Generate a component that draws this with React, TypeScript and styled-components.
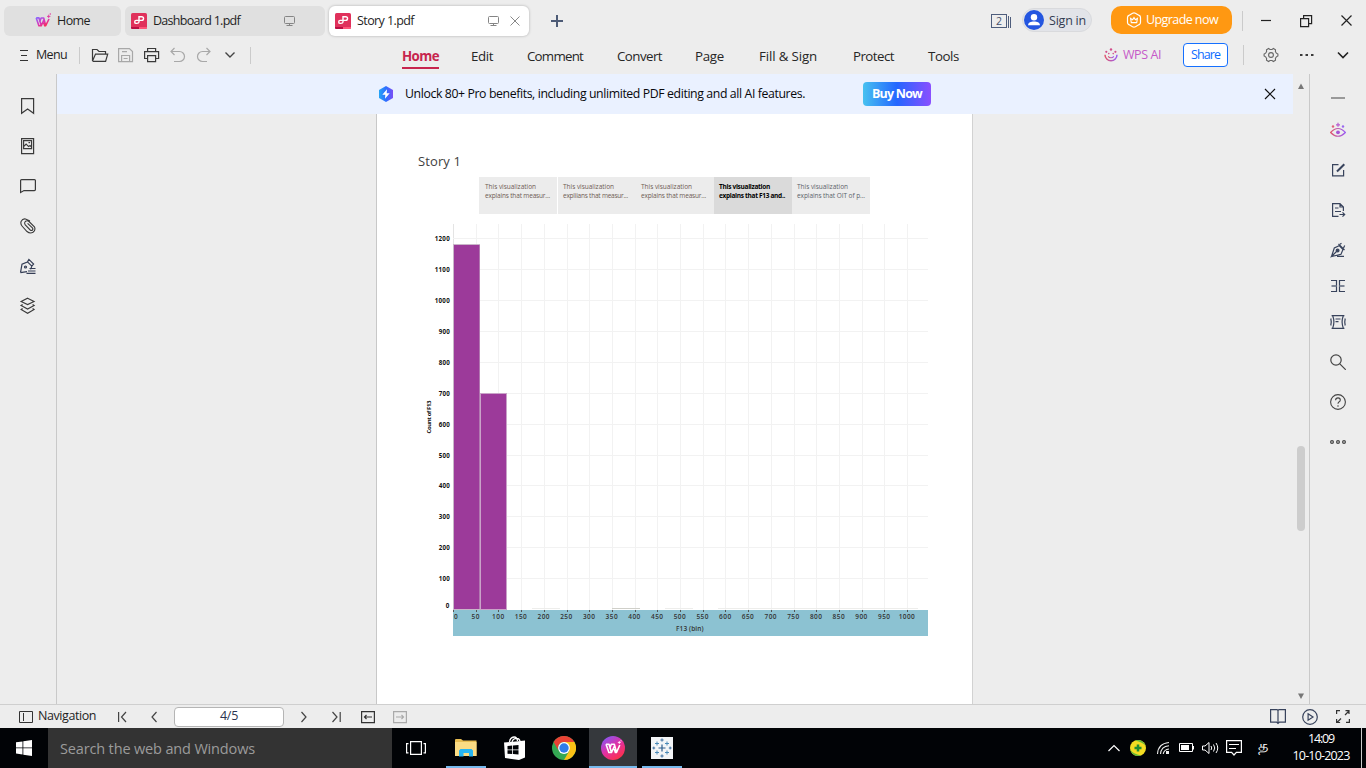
import React, { useLayoutEffect, useRef, useState } from "react";
import styled, { createGlobalStyle } from "styled-components";

const GlobalStyle = createGlobalStyle`
  * { box-sizing: border-box; }
  body { margin: 0; background: #ededed; }
  svg { display: block; flex: none; }
`;

const FONT = `"Open Sans", "Noto Sans", sans-serif`;

/* ---------- fitted text ---------- */

const Label = styled.span<{ $size?: number; $color?: string; $weight?: number; $w: number; $lift?: number }>`
  display: block;
  flex: none;
  width: ${(p) => p.$w}px;
  font-size: ${(p) => p.$size ?? 12.5}px;
  font-weight: ${(p) => p.$weight ?? 400};
  color: ${(p) => p.$color ?? "#1f1f1f"};
  padding-bottom: ${(p) => (p.$lift ?? 0) * 2}px;
  white-space: nowrap;
`;

type TextProps = { w: number; size?: number; color?: string; weight?: number; lift?: number; children: string };

function Text({ w, size, color, weight, lift, children }: TextProps) {
  const ref = useRef<HTMLSpanElement>(null);
  const [spacing, setSpacing] = useState(0);
  useLayoutEffect(() => {
    if (ref.current) {
      const natural = ref.current.getBoundingClientRect().width;
      setSpacing((w - natural) / Math.max(1, children.length));
    }
  }, []);
  return (
    <Label $w={w} $size={size} $color={color} $weight={weight} $lift={lift}>
      <span ref={ref} style={{ letterSpacing: `${spacing}px` }}>{children}</span>
    </Label>
  );
}

/* ---------- frame ---------- */

const Window = styled.div`
  width: 1366px;
  height: 768px;
  overflow: hidden;
  display: flex;
  flex-direction: column;
  background: #ededed;
  font-family: ${FONT};
`;

const TabBar = styled.header`
  height: 42px;
  display: flex;
  align-items: center;
  padding: 0 14px 0 4px;
  flex: none;
`;

const Tab = styled.div<{ $w: number; $active?: boolean; $pad: number }>`
  width: ${(p) => p.$w}px;
  height: 30px;
  margin-right: 4px;
  padding: 0 10px 0 ${(p) => p.$pad}px;
  display: flex;
  align-items: center;
  gap: 6px;
  border-radius: 6px;
  background: ${(p) => (p.$active ? "#fff" : "#e0e0e0")};
  box-shadow: ${(p) => (p.$active ? "0 0 2px 1px #cfcfcf" : "none")};
`;

const Spacer = styled.div`
  flex: 1;
`;

const Gap = styled.div<{ $w: number }>`
  width: ${(p) => p.$w}px;
  flex: none;
`;

const Divider = styled.div<{ $h: number }>`
  width: 1px;
  height: ${(p) => p.$h}px;
  background: #cbcbcb;
  flex: none;
`;

const AccountPill = styled.div`
  width: 70px;
  height: 24px;
  border-radius: 12px;
  border: 1px solid #d9dadd;
  background: #e2e4e9;
  display: flex;
  align-items: center;
  gap: 5px;
  padding-left: 1px;
  margin-bottom: 2px;
`;

const UpgradeButton = styled.div`
  width: 121px;
  height: 28px;
  border-radius: 10px;
  background: #ff9812;
  display: flex;
  align-items: center;
  gap: 4px;
  padding-left: 15px;
  margin-bottom: 2px;
`;

const Toolbar = styled.div`
  height: 32px;
  display: flex;
  align-items: center;
  flex: none;
  padding-bottom: 6px;
`;

const MenuButton = styled.div`
  width: 79px;
  padding-left: 19px;
  display: flex;
  align-items: center;
  gap: 7px;
`;

const ToolCell = styled.div<{ $w?: number }>`
  width: ${(p) => p.$w ?? 26}px;
  height: 26px;
  flex: none;
  display: flex;
  align-items: center;
  justify-content: center;
`;

const MenuTabs = styled.nav`
  display: flex;
  height: 26px;
  width: 702px;
`;

const MenuTab = styled.div<{ $active?: boolean; $gap: number }>`
  height: 27px;
  line-height: 29px;
  margin-left: ${(p) => p.$gap}px;
  border-bottom: 2px solid ${(p) => (p.$active ? "#c7254e" : "transparent")};
  flex: none;
`;

const ShareButton = styled.div`
  width: 45px;
  height: 24px;
  border: 1px solid #1570ff;
  border-radius: 4px;
  background: #fff;
  display: flex;
  align-items: center;
  justify-content: center;
`;

/* ---------- body ---------- */

const Body = styled.div`
  display: flex;
  height: 630px;
  flex: none;
`;

const LeftRail = styled.aside`
  width: 57px;
  border-right: 1px solid #c9c9c9;
  padding: 12px 2px 0 0;
`;

const RailCell = styled.div<{ $h: number }>`
  height: ${(p) => p.$h}px;
  display: flex;
  align-items: center;
  justify-content: center;
`;

const RightRail = styled.aside`
  width: 57px;
  border-left: 1px solid #c9c9c9;
  padding-top: 16px;
`;

const Workspace = styled.main`
  width: 1236px;
  display: flex;
  flex-direction: column;
`;

const Banner = styled.div`
  height: 40px;
  flex: none;
  background: #eaf1ff;
  display: flex;
  align-items: center;
  padding-left: 321px;
`;

const BuyButton = styled.div`
  width: 68px;
  height: 24px;
  border-radius: 4px;
  background: linear-gradient(90deg, #47c1f0, #2466ff 50%, #8a4fff);
  display: flex;
  align-items: center;
  justify-content: center;
`;

const ScrollTrack = styled.div`
  width: 16px;
  display: flex;
  flex-direction: column;
  align-items: center;
  justify-content: space-between;
  padding: 9px 0 5px;
`;

const ScrollThumb = styled.div`
  width: 8px;
  height: 85px;
  border-radius: 4px;
  background: #cdcdcd;
  margin-top: 194px;
`;

const Page = styled.article`
  width: 597px;
  height: 590px;
  margin-left: 319px;
  background: #fff;
  border-left: 1px solid #c8c8c8;
  border-right: 1px solid #d2d2d2;
  padding: 38px 0 0 41px;
`;

const StoryStrip = styled.div`
  display: flex;
  margin: 7px 0 10px 61px;
`;

const StoryPoint = styled.div<{ $active?: boolean; $first?: boolean }>`
  width: ${(p) => (p.$first ? 79 : 78)}px;
  height: 37px;
  padding: 5px 0 0 ${(p) => (p.$first ? 6 : 5)}px;
  background: ${(p) => (p.$active ? "#dadada" : "#ececec")};
  border-right: ${(p) => (p.$first ? "1px solid #fff" : "0")};
  line-height: 9px;
`;

/* ---------- footer ---------- */

const StatusBar = styled.div`
  height: 24px;
  flex: none;
  border-top: 1px solid #cfcfcf;
  display: flex;
  align-items: center;
`;

const PageBox = styled.div`
  width: 110px;
  height: 20px;
  border: 1px solid #b5b5b5;
  border-radius: 4px;
  background: #fff;
  display: flex;
  align-items: center;
  justify-content: center;
`;

const Taskbar = styled.footer`
  height: 40px;
  flex: none;
  background: #010306;
  display: flex;
`;

const SearchBox = styled.div`
  width: 344px;
  background: #333;
  display: flex;
  align-items: center;
  padding-left: 12px;
`;

const TaskItem = styled.div<{ $w: number; $open?: boolean; $active?: boolean; $gap?: number }>`
  width: ${(p) => p.$w}px;
  height: 40px;
  margin-left: ${(p) => p.$gap ?? 0}px;
  display: flex;
  align-items: center;
  justify-content: center;
  background: ${(p) => (p.$active ? "#35383c" : "transparent")};
  border-bottom: ${(p) => (p.$open ? "2px solid #76b9ed" : "0")};
  padding-top: ${(p) => (p.$open ? 2 : 0)}px;
`;

const Clock = styled.div`
  width: 74px;
  display: flex;
  flex-direction: column;
  align-items: center;
  line-height: 17px;
  padding-top: 2px;
`;

const InputLanguage = styled.div`
  width: 18px;
  text-align: center;
  color: #fff;
  font-size: 16px;
  line-height: 35px;
`;

/* ---------- icons ---------- */

type IconProps = { w?: number; h?: number; c?: string; sw?: number; children: React.ReactNode };

function Icon({ w = 18, h = 18, c = "#3a3a3a", sw = 1.2, children }: IconProps) {
  return (
    <svg width={w} height={h} viewBox={`0 0 ${w} ${h}`} fill="none" stroke={c} strokeWidth={sw}>
      {children}
    </svg>
  );
}

const WpsLogo = () => (
  <svg width="16" height="16" viewBox="0 0 16 16" fill="none">
    <defs>
      <linearGradient id="wps" x1="0" y1="0" x2="1" y2="1">
        <stop offset="0" stopColor="#8a68ff" />
        <stop offset=".5" stopColor="#d936b8" />
        <stop offset="1" stopColor="#ff2d3d" />
      </linearGradient>
    </defs>
    <path d="M1.200 4.900h2.800l2.300 7.800L9 6.500M4.600 9l1.500-4h2.600l2 7.700L14 6M1.200 4.900l2.700 7.800h2.400M8.700 9.500l1 3.200h1" stroke="url(#wps)" strokeWidth="1.600" strokeLinejoin="round" />
    <path d="M12 3.400h3.400M13.700 1.700v3.400" stroke="#e3379c" strokeWidth=".9" />
    <circle cx="15.300" cy="1" r=".7" fill="#e3379c" />
  </svg>
);

const PdfLogo = () => (
  <svg width="16" height="16" viewBox="0 0 16 16">
    <rect width="16" height="16" rx="1.600" fill="#e0315b" />
    <path d="M0 14h8v2H1.500Q0 16 0 14.500z" fill="#b90e43" />
    <path d="M8 14h8v.5Q16 16 14.500 16H8z" fill="#ff5478" />
    <path d="M8 9.300V3.700h2.700a1.800 1.800 0 0 1 0 3.700H5.200a1.500 1.500 0 0 0 0 3Q7.800 10.600 8 9" fill="none" stroke="#fff" strokeWidth="1.400" />
  </svg>
);

const Monitor = () => (
  <Icon w={12} h={12} c="#858585" sw={1}>
    <rect x=".5" y="1.500" width="10" height="7" rx="1" />
    <path d="M5.500 8.500v2M2.500 10.500h6" />
  </Icon>
);

const TabClose = () => <Icon w={14} h={10} c="#888" sw={1}><path d="M4.500.500l9 9M13.500.500l-9 9" /></Icon>;

const UserBadge = () => (
  <svg width="20" height="20" viewBox="0 0 20 20">
    <circle cx="10" cy="10" r="10" fill="#2456e0" />
    <circle cx="10" cy="7.200" r="3.200" fill="#fff" />
    <path d="M4 15.200c.4-3 2.800-3.700 6-3.700s5.600.7 6 3.700z" fill="#fff" />
  </svg>
);

const Crown = () => (
  <Icon w={16} h={16} c="#fff" sw={1.2}>
    <path d="M6.600 1.200q1.400-.7 2.800 0l3.800 2.200q1.300.7 1.300 2.200v4.800q0 1.500-1.300 2.200l-3.800 2.200q-1.400.7-2.800 0L2.800 12.600q-1.300-.7-1.300-2.200V5.600q0-1.500 1.300-2.200z" />
    <path d="M4.600 6.400l2 1.400L8 5.600l1.400 2.200 2-1.400-.7 4.200H5.300z" strokeWidth="1.100" />
  </Icon>
);

const AiFace = () => (
  <svg width="14" height="14" viewBox="0 0 14 14" fill="none">
    <defs>
      <linearGradient id="ai" x1="0" x2="1">
        <stop offset="0" stopColor="#e0566c" />
        <stop offset="1" stopColor="#9a5cf5" />
      </linearGradient>
    </defs>
    <path d="M1 6.800a6 6 0 0 0 12 0" stroke="url(#ai)" strokeWidth="1.500" />
    <path d="M4.300 8.200a2.800 2.200 0 0 0 5.400 0" stroke="url(#ai)" strokeWidth="1.100" />
    <g fill="#d24f8c">
      <circle cx="2.300" cy="3.800" r="1.100" /><circle cx="7" cy="1.500" r="1.200" /><circle cx="11.400" cy="3.800" r="1.100" />
      <circle cx="4.800" cy="5.600" r=".8" /><circle cx="9.200" cy="5.600" r=".8" />
    </g>
  </svg>
);

const Gear = () => (
  <Icon w={16} h={16} c="#666" sw={1.1}>
    <path d="M5.600 1.500l1.400 1h2l1.400-1 2.100 1.300-.1 1.700 1 1.700 1.500.8v2l-1.500.8-1 1.700.1 1.700-2.100 1.300-1.400-1H7l-1.400 1-2.100-1.300.1-1.700-1-1.700L1.100 9V7l1.500-.8 1-1.700-.1-1.700z" />
    <circle cx="8" cy="8" r="2.400" />
  </Icon>
);

const WindowsLogo = () => (
  <svg width="16" height="16" viewBox="0 0 16 16" fill="#fff">
    <path d="M0 2.300l6.500-.9v6.100H0zM7.300 1.300L16 0v7.500H7.300zM0 8.300h6.500v6.200L0 13.600zM7.300 8.300H16V16l-8.700-1.300z" />
  </svg>
);

const Explorer = () => (
  <svg width="22" height="18" viewBox="0 0 22 18">
    <path d="M0 1q0-1 1-1h5l2 1.500h13.500V17H0z" fill="#e8bd52" />
    <path d="M0 3h21.500v14H0z" fill="#fbdc84" />
    <path d="M4 17.500v-6L5.500 10h11l1.500 1.500v6h-4V14H8.500v3.500z" fill="#27b5f1" />
  </svg>
);

const Store = () => (
  <svg width="22" height="24" viewBox="0 0 22 24">
    <path d="M5.500 6Q6 1.500 10 1q3-.2 3.500 4M8 6q1-3.800 5-3.700Q15.500 2.500 16 5" fill="none" stroke="#fff" strokeWidth="1.300" />
    <path d="M0 6.600L21 4.500v17L15 24 1 22z" fill="#fff" />
    <path d="M3.500 10l4.700-.5v3.900H3.500zM9 9.400l5.500-.5v4.500H9zM3.500 14.200h4.700v3.900l-4.700-.4zM9 14.200h5.500v4.400L9 18.100z" fill="#010306" />
  </svg>
);

const Chrome = () => (
  <svg width="24" height="24" viewBox="0 0 24 24">
    <circle cx="12" cy="12" r="12" fill="#34a853" />
    <path d="M22.400 6A12 12 0 0 1 12 24l5.200-9V6z" fill="#fbc116" />
    <path d="M12 6h10.400l-5.200 9z" fill="#fbc116" />
    <path d="M1.600 6A12 12 0 0 1 22.400 6H12a6 6 0 0 0-5.200 9z" fill="#e94235" />
    <circle cx="12" cy="12" r="5.900" fill="#fff" />
    <circle cx="12" cy="12" r="4.700" fill="#2f7de9" />
  </svg>
);

const WpsApp = () => (
  <svg width="24" height="24" viewBox="0 0 24 24" fill="none">
    <defs>
      <linearGradient id="app" x1=".1" y1="0" x2=".8" y2="1">
        <stop offset="0" stopColor="#7c5cff" />
        <stop offset=".5" stopColor="#e230a4" />
        <stop offset="1" stopColor="#ff3040" />
      </linearGradient>
    </defs>
    <circle cx="12" cy="12" r="12" fill="url(#app)" />
    <path d="M5 8.200h3l2.500 8.300 3.200-7M8.700 12.500l1.600-4.300h3l2.200 8.300L18.800 9M5 8.200l2.900 8.300h2.600M13.300 13l1.100 3.500h1" stroke="#fff" strokeWidth="1.600" strokeLinejoin="round" />
    <path d="M18.300 5v3M16.800 6.500h3" stroke="#fff" strokeWidth=".8" />
    <circle cx="20" cy="4.800" r=".6" fill="#fff" />
  </svg>
);

const cross = (x: number, y: number, r: number) => `M${x - r} ${y}h${2 * r}M${x} ${y - r}v${2 * r}`;

const Tableau = () => (
  <svg width="22" height="22" viewBox="0 0 22 22" fill="none">
    <rect width="22" height="22" fill="#f3f5f7" />
    <path d={cross(11, 11, 3.5)} stroke="#2c5d8c" strokeWidth="1.200" />
    <path d={[cross(6, 6.5, 2), cross(16, 6.5, 2), cross(6, 15.5, 2), cross(16, 15.5, 2)].join("")} stroke="#4a8ab8" strokeWidth="1" />
    <path d={[cross(11, 3, 1.6), cross(11, 19, 1.6), cross(2.8, 11, 1.4), cross(19.2, 11, 1.4)].join("")} stroke="#3c6fa0" strokeWidth="1" />
  </svg>
);

/* ---------- chart ---------- */

const X_TICKS = Array.from({ length: 21 }, (_, i) => i * 50);
const Y_TICKS = Array.from({ length: 13 }, (_, i) => i * 100);
const xPos = (v: number) => 35.5 + (v / 50) * 22.7;
const yPos = (v: number) => Math.round(385 - v * 0.309) + 0.5;

function Histogram() {
  return (
    <svg width="512" height="414" viewBox="0 0 512 414" fontFamily={FONT}>
      {X_TICKS.map((v) => (
        <path key={v} d={`M${Math.round(xPos(v) - 0.5) + 0.5} 0V386`} stroke={v ? "#f2f2f2" : "#e4e4e4"} />
      ))}
      {Y_TICKS.slice(1).map((v) => (
        <path key={v} d={`M35 ${yPos(v)}H510`} stroke="#f2f2f2" />
      ))}
      <rect x="35" y="20" width="27" height="366" fill="#c9b6c9" />
      <rect x="62" y="169" width="27" height="217" fill="#c9a3c8" />
      <rect x="36" y="21" width="25.500" height="364" fill="#9c3a9a" />
      <rect x="63" y="170" width="25" height="215" fill="#9c3a9a" />
      <path d="M114 384.500h28M247 384.500h28M300 384.500h200" stroke="#ededeb" />
      <path d="M194 384.500h28" stroke="#cfcfc9" />
      <rect x="35" y="386" width="475" height="26" fill="#8cc2d2" />
      {X_TICKS.map((v) => {
        const w = v === 0 ? 4 : v < 100 ? 8 : v < 1000 ? 12 : 16;
        const x = v === 0 ? 38 : xPos(v) - 0.8;
        return (
          <g key={v}>
            <path d={`M${Math.round(xPos(v) - 0.5) + 0.5} 386v2`} stroke="#555" />
            <text x={x - w / 2} y="395.200" fontSize="6.500" fontWeight="600" fill="#333" textLength={w}>{v}</text>
          </g>
        );
      })}
      {Y_TICKS.map((v) => {
        const w = v === 0 ? 4 : v < 1000 ? 11 : 15;
        return (
          <text key={v} x={31.700 - w} y={v === 0 ? 384 : yPos(v) + 2.300} fontSize="6.200" fontWeight="700" fill="#111" textLength={w}>{v}</text>
        );
      })}
      <text x="258" y="406.800" fontSize="6.500" fontWeight="600" fill="#333" textLength="27.500">F13 (bin)</text>
      <text transform="translate(12.800 209.500) rotate(-90)" fontSize="6" fontWeight="700" fill="#111" textLength="33">Count of F13</text>
    </svg>
  );
}

const POINTS: { lines: [string, string]; widths: [number, number]; color: string }[] = [
  { lines: ["This visualization", "explains that measur..."], widths: [51, 65], color: "#6e5c54" },
  { lines: ["This visualization", "expliians that measur..."], widths: [51, 65], color: "#6e5c54" },
  { lines: ["This visualization", "explains that measur..."], widths: [51, 65], color: "#6e5c54" },
  { lines: ["This visualization", "explains that F13 and.."], widths: [51, 66], color: "#000" },
  { lines: ["This visualization", "explains that OIT of p..."], widths: [51, 68], color: "#5c646b" },
];

const MENU: [string, number, number][] = [
  ["Home", 37, 151], ["Edit", 22, 32], ["Comment", 56, 34], ["Convert", 45, 34],
  ["Page", 29, 33], ["Fill & Sign", 58, 35], ["Protect", 41, 36], ["Tools", 31, 34],
];

export default function App() {
  return (
    <Window>
      <GlobalStyle />
      <TabBar>
        <Tab $w={117} $pad={31}><WpsLogo /><Text w={33} lift={0.5}>Home</Text></Tab>
        <Tab $w={200} $pad={6}><PdfLogo /><Text w={87} lift={0.5}>Dashboard 1.pdf</Text><Gap $w={32} /><Monitor /></Tab>
        <Tab $w={200} $pad={6} $active><PdfLogo /><Text w={57} lift={0.5}>Story 1.pdf</Text><Gap $w={62} /><Monitor /><TabClose /></Tab>
        <Gap $w={18} />
        <Icon w={12} h={12} c="#4d5b76" sw={2}><path d="M6 0v12M0 6h12" /></Icon>
        <Spacer />
        <Icon w={21} h={16} c="#4e5d7c" sw={1}>
          <rect x=".5" y="1.500" width="15" height="13" />
          <path d="M17.500 3v12M19.500 4v11" />
          <text x="5" y="12" fontSize="10.500" fontFamily={FONT} fill="#44506b" stroke="none">2</text>
        </Icon>
        <Gap $w={10} />
        <AccountPill><UserBadge /><Text w={37} color="#333c52">Sign in</Text></AccountPill>
        <Gap $w={19} />
        <UpgradeButton><Crown /><Text w={72} color="#fff" lift={0.5}>Upgrade now</Text></UpgradeButton>
        <Gap $w={10} />
        <Divider $h={20} />
        <Gap $w={18} />
        <Icon w={11} h={12} c="#222"><path d="M0 5.500h10" /></Icon>
        <Gap $w={28} />
        <Icon w={13} h={14} c="#222"><path d="M.6 4.600h8v8h-8zM3.600 4.600v-3h8v8h-3" /></Icon>
        <Gap $w={28} />
        <Icon w={11} h={12} c="#222"><path d="M.5.500l10 10M10.500.500l-10 10" /></Icon>
      </TabBar>

      <Toolbar>
        <MenuButton>
          <Icon w={10} h={12} c="#333" sw={1}><path d="M1 1.500h8M2 6.500h6M1 11.500h8" /></Icon>
          <Text w={31} lift={0.5}>Menu</Text>
        </MenuButton>
        <Divider $h={17} />
        <Gap $w={7} />
        <ToolCell><Icon><path d="M1.500 15V3.500h4.500l2 2h6.500V8M1.500 15L4.500 8.100h12.200L14.600 15.300H1.500" /></Icon></ToolCell>
        <ToolCell><Icon c="#a8a8a8"><path d="M1.600 2.600h10.800l3.100 3v10H1.600zM4.600 15.500v-6h8v6M5 5.600h5M6.600 12.500h4" /></Icon></ToolCell>
        <ToolCell><Icon><path d="M4.600 5.500v-3h8v3M4.600 12.500h-3V5.600h14v6.900h-3M4.600 9.600h8v6h-8z" /></Icon></ToolCell>
        <ToolCell><Icon c="#a8a8a8"><path d="M5.500 2L2 5.500 5.500 9M2 5.500h8.500a5 5 0 0 1 0 10H5" /></Icon></ToolCell>
        <ToolCell><Icon c="#a8a8a8"><path d="M11.500 2L15 5.500 11.500 9M15 5.500H7.500a5 5 0 0 0 0 10H12" /></Icon></ToolCell>
        <ToolCell><Icon w={12} h={8} c="#444" sw={1.4}><path d="M1.500 1.500L6 6l4.500-4.500" /></Icon></ToolCell>
        <Gap $w={7} />
        <Divider $h={17} />
        <MenuTabs>
          {MENU.map(([name, w, gap], i) => (
            <MenuTab key={name} $active={i === 0} $gap={gap}>
              <Text w={w} size={13.3} weight={i ? 400 : 700} color={i ? "#262626" : "#c7254e"}>{name}</Text>
            </MenuTab>
          ))}
        </MenuTabs>
        <Gap $w={151} />
        <AiFace />
        <Gap $w={5} />
        <Text w={38} color="#c659c8" lift={0.5}>WPS AI</Text>
        <Gap $w={22} />
        <ShareButton><Text w={29} color="#0d6bff" lift={0.5}>Share</Text></ShareButton>
        <Gap $w={15} />
        <Divider $h={20} />
        <Gap $w={19} />
        <Gear />
        <Gap $w={21} />
        <Icon w={14} h={4}><path d="M0 2h2.500M5.500 2H8M11 2h2.500" strokeWidth="2" /></Icon>
        <Gap $w={23} />
        <Icon w={12} h={8} c="#222" sw={1.6}><path d="M1 1.500l5 5 5-5" /></Icon>
      </Toolbar>

      <Body>
        <LeftRail>
          <RailCell $h={40}><Icon><path d="M3.600 1.600h12v14.700l-6-4.300-6 4.300z" /></Icon></RailCell>
          <RailCell $h={40}><Icon><path d="M3.600 1.600h12v15h-12zM5.600 3.600h8v8h-8zM5.600 9.600l2.500-2.500 2.500 2.500 1.500-1 1.500 1.500" /><path d="M10.500 5.600h1.600" /></Icon></RailCell>
          <RailCell $h={40}><Icon><path d="M4.500 2.600h12q.9 0 .9 1v9q0 1-1 1H6l-3.400 1.900V3.600q0-1 1-1z" /></Icon></RailCell>
          <RailCell $h={40}><Icon sw={1.1}><path d="M12 4L7.500 2Q4.600 1.500 3.200 4.200 2.200 7 4 9l5 5.500q3 2.600 6 .8 3-2.300 1.400-5.500L11 4.500Q9 3 7.300 4.500 6 6 7.300 8l4.900 5q1.300 1 2.300 0 .8-1-.1-2.100L9.600 6.300" /></Icon></RailCell>
          <RailCell $h={40}><Icon c="#353e56"><path d="M2.500 15.600L4 7.100l5.500-2.200 4.300 4.300-1.200 3.200M2.500 15.600l6.500-1M9.500 4.900l1.400-2.500 4.700 4.700-1.800 2.100M11.500 11.500h6M10 14h7.500M8.500 16.400h9" /><circle cx="7.500" cy="10" r="1" /></Icon></RailCell>
          <RailCell $h={40}><Icon sw={1.1}><path d="M9.600 1.200l6.500 3.200-6.500 3.200-6.500-3.200zM4.600 7.600l-1.500.8L9.600 12l6.500-3.600-1.500-.8M4.600 11.500l-1.500 1 6.500 3.800 6.500-3.800-1.500-1" /></Icon></RailCell>
        </LeftRail>

        <Workspace>
          <Banner>
            <svg width="16" height="16" viewBox="0 0 16 16">
              <defs><linearGradient id="bolt" x1="0" x2="1"><stop offset="0" stopColor="#25a5f5" /><stop offset=".5" stopColor="#2d6fff" /><stop offset="1" stopColor="#7c4df5" /></linearGradient></defs>
              <path d="M8 0l7 4v8l-7 4-7-4V4z" fill="url(#bolt)" />
              <path d="M9 3.200L4.300 8.800h3L7 12.800l4.700-5.600h-3z" fill="#fff" />
            </svg>
            <Gap $w={11} />
            <Text w={400} size={12.3} color="#08080c" lift={0.5}>Unlock 80+ Pro benefits, including unlimited PDF editing and all AI features.</Text>
            <Gap $w={58} />
            <BuyButton><Text w={50} weight={700} color="#fff" lift={0.5}>Buy Now</Text></BuyButton>
            <Gap $w={333} />
            <Icon w={12} h={12} c="#111"><path d="M1 1l10 10M11 1L1 11" /></Icon>
          </Banner>
          <Page>
            <Text w={43} size={13} color="#414141">Story 1</Text>
            <StoryStrip>
              {POINTS.map((p, i) => (
                <StoryPoint key={i} $active={i === 3} $first={i === 0}>
                  <Text w={p.widths[0]} size={6.5} weight={i === 3 ? 700 : 400} color={p.color}>{p.lines[0]}</Text>
                  <Text w={p.widths[1]} size={6.5} weight={i === 3 ? 700 : 400} color={p.color}>{p.lines[1]}</Text>
                </StoryPoint>
              ))}
            </StoryStrip>
            <Histogram />
          </Page>
        </Workspace>

        <ScrollTrack>
          <svg width="6" height="6" viewBox="0 0 6 6"><path d="M3 .5L6 6H0z" fill="#777" /></svg>
          <ScrollThumb />
          <svg width="6" height="6" viewBox="0 0 6 6"><path d="M3 6l3-5.500H0z" fill="#777" /></svg>
        </ScrollTrack>

        <RightRail>
          <RailCell $h={16}><Icon w={14} h={4} c="#999" sw={2}><path d="M0 2h14" /></Icon></RailCell>
          <RailCell $h={48}>
            <svg width="16" height="16" viewBox="0 0 16 16" fill="none" stroke="url(#ai)" strokeWidth="1.200">
              <path d="M.6 10.500Q8 2.500 15.400 10.500 8 18 .6 10.500z" />
              <circle cx="8" cy="10.300" r="1.900" fill="#a653d4" stroke="none" />
              <path d="M8 .8v4M6 2.800h4" stroke="#b75ad0" /><circle cx="3" cy="4.500" r="1.200" fill="#e0607a" stroke="none" /><circle cx="13" cy="4.500" r="1.200" fill="#9a68f0" stroke="none" />
            </svg>
          </RailCell>
          <RailCell $h={32}><Icon w={16} h={16} c="#38435c"><path d="M8.500 2.600H2.600v11.300h11V8" /><path d="M7 9.500L14.300 2.200" strokeWidth="2" /></Icon></RailCell>
          <RailCell $h={48}><Icon w={16} h={16} c="#38435c"><path d="M8.500 14.400H2.600V1.600h7.400l3.400 3.400v4M10 1.600v3.400h3.400M5 6h3.500M5 9.500h6M9.500 12.500h5M12.500 10.300l2.200 2.200-2.200 2.200" /></Icon></RailCell>
          <RailCell $h={32}><Icon w={16} h={16} c="#38435c"><path d="M1.500 14.500L4.300 6l4.900-2.300 3.800 3.800-2 4.800L1.500 14.500 7 9M8.500 2l6 6M10 2.200l1.500-1M13.500 6l1.200-2.500M7 14.300h7" /><circle cx="7.600" cy="8.400" r="1.400" fill="#38435c" /></Icon></RailCell>
          <RailCell $h={40}><Icon w={16} h={14} c="#38435c"><path d="M1 1.500h5.500v11H1M15 1.500H9.500v11H15" /><path d="M1.500 7h5M9.500 7h5" stroke="#7f8797" strokeWidth="2" /></Icon></RailCell>
          <RailCell $h={32}><Icon w={16} h={16} c="#38435c"><path d="M1.600 1.600h12.800M1.600 14.400h12.800M2.600 1.600q2.600 6.400 0 12.800M13.400 1.600q-2.600 6.400 0 12.800M5.500 5h5M5.500 7.600h3M.8 4.500q.9 3.500 0 7M15.200 4.500q-.9 3.500 0 7" /></Icon></RailCell>
          <RailCell $h={48}><Icon w={16} h={16} c="#444"><circle cx="6" cy="6" r="5.200" /><path d="M9.800 9.800l6 6" /></Icon></RailCell>
          <RailCell $h={32}><Icon w={16} h={16} c="#444" sw={1.1}><circle cx="8" cy="8" r="7.400" /><path d="M5.600 6.200Q5.700 3.900 8 3.900t2.300 2.100Q10.200 7.300 8.900 8 8 8.500 8 9.700M8 11.300v1.400" /></Icon></RailCell>
          <RailCell $h={48}><Icon w={16} h={6} c="#444"><circle cx="2" cy="3" r="1.400" /><circle cx="8" cy="3" r="1.400" /><circle cx="14" cy="3" r="1.400" /></Icon></RailCell>
        </RightRail>
      </Body>

      <StatusBar>
        <Gap $w={19} />
        <Icon w={14} h={12} c="#333" sw={1}><path d="M.5.500h13v11H.5zM4.500 2v8" /></Icon>
        <Gap $w={5} />
        <Text w={58} lift={1}>Navigation</Text>
        <Gap $w={22} />
        <Icon w={9} h={12} c="#444"><path d="M.6 1v10M8 1L3.500 6 8 11" /></Icon>
        <Gap $w={24} />
        <Icon w={6} h={12} c="#444"><path d="M5.500 1L1 6l4.500 5" /></Icon>
        <Gap $w={17} />
        <PageBox><Text w={18} color="#2b3350" lift={1}>4/5</Text></PageBox>
        <Gap $w={17} />
        <Icon w={6} h={12} c="#444"><path d="M.5 1L5 6 .5 11" /></Icon>
        <Gap $w={25} />
        <Icon w={9} h={12} c="#444"><path d="M.5 1L5 6 .5 11M8.200 1v10" /></Icon>
        <Gap $w={20} />
        <Icon w={14} h={14} c="#333"><path d="M.6 1.600h12.800v11H.6zM3.500 7h7.500M5.500 5l-2 2 2 2" /></Icon>
        <Gap $w={18} />
        <Icon w={14} h={14} c="#aaa"><path d="M.6 1.600h12.800v11H.6zM3 7h7.500M8.500 5l2 2-2 2" /></Icon>
        <Gap $w={863} />
        <Icon w={16} h={16} c="#38435c"><path d="M.6.600H7l1 .8 1-.8h6.400v12.500H9.500L8 14.500l-1.500-1.400H.6zM8 1.500v12" /></Icon>
        <Gap $w={16} />
        <Icon w={16} h={16} c="#38435c"><circle cx="8" cy="8" r="7.300" /><path d="M6.100 4.800L11 8l-4.900 3.200z" /></Icon>
        <Gap $w={18} />
        <Icon w={14} h={14} c="#333"><path d="M.6 4V.600H4M10 12.400h3.400V9M9 5L13 1M9.500.600h3.500v3.500M5 8.500l-4 4M.6 9v3.500h3.500" /></Icon>
      </StatusBar>

      <Taskbar>
        <TaskItem $w={48}><WindowsLogo /></TaskItem>
        <SearchBox><Text w={195} size={14.5} color="#9b9b9b">Search the web and Windows</Text></SearchBox>
        <TaskItem $w={48}>
          <Icon w={20} h={14} c="#fff"><path d="M4.600.600h10.800v12.800H4.600zM2.500 2.600H.6v9.300h1.900M17.500 2.600h1.900v9.300h-1.900" /></Icon>
        </TaskItem>
        <TaskItem $w={40} $gap={6} $open><Explorer /></TaskItem>
        <TaskItem $w={48} $gap={5}><Store /></TaskItem>
        <TaskItem $w={48} $gap={1}><Chrome /></TaskItem>
        <TaskItem $w={48} $gap={1} $open $active><WpsApp /></TaskItem>
        <TaskItem $w={40} $gap={5} $open><Tableau /></TaskItem>
        <Spacer />
        <TaskItem $w={22}><Icon w={12} h={8} c="#fff"><path d="M.5 7L6 1.500 11.500 7" /></Icon></TaskItem>
        <TaskItem $w={26}>
          <svg width="16" height="16" viewBox="0 0 16 16">
            <circle cx="8" cy="8" r="8" fill="#f3dc22" />
            <path d="M5 .6A8 8 0 0 1 15.800 6.500Q13 2 5 .6zM11 15.400A8 8 0 0 1 .2 9.500Q3 14 11 15.400z" fill="#5fb83a" />
            <path d="M8 4.500v7M4.500 8h7" stroke="#1f8c32" strokeWidth="2.500" />
          </svg>
        </TaskItem>
        <TaskItem $w={24}><Icon w={14} h={14} c="#eee" sw={1.1}><path d="M1.500 13Q2 2.500 13 1.500M4.500 13Q5 5.500 13 4.700M7.200 13Q8 8.500 13 8" /><path d="M10 11.500h3" strokeWidth="3" /></Icon></TaskItem>
        <TaskItem $w={23}><Icon w={16} h={10} c="#fff" sw={1}><path d="M.5.500h13v8H.5zM14.500 3v3.500" /><rect x="2" y="2" width="8" height="5" fill="#fff" stroke="none" /></Icon></TaskItem>
        <TaskItem $w={24}><Icon w={17} h={14} c="#fff" sw={1}><path d="M.5 5h2.500l4-3.500v11L3 9H.5zM9 5q1.500 2 0 4M11.500 3.500q2.500 3.500 0 7M14 2q3.500 5 0 10" /></Icon></TaskItem>
        <TaskItem $w={24}><Icon w={16} h={16} c="#fff"><path d="M.6.600h14.800v11.800h-5L8 15l-2.400-2.600h-5zM3 4.500h10M3 8.500h7" /></Icon></TaskItem>
        <Gap $w={8} />
        <InputLanguage>த</InputLanguage>
        <Gap $w={12} />
        <Clock>
          <Text w={26} color="#fff">14:09</Text>
          <Text w={57} color="#fff">10-10-2023</Text>
        </Clock>
        <Gap $w={3} />
        <Divider $h={40} />
        <Gap $w={4} />
      </Taskbar>
    </Window>
  );
}
